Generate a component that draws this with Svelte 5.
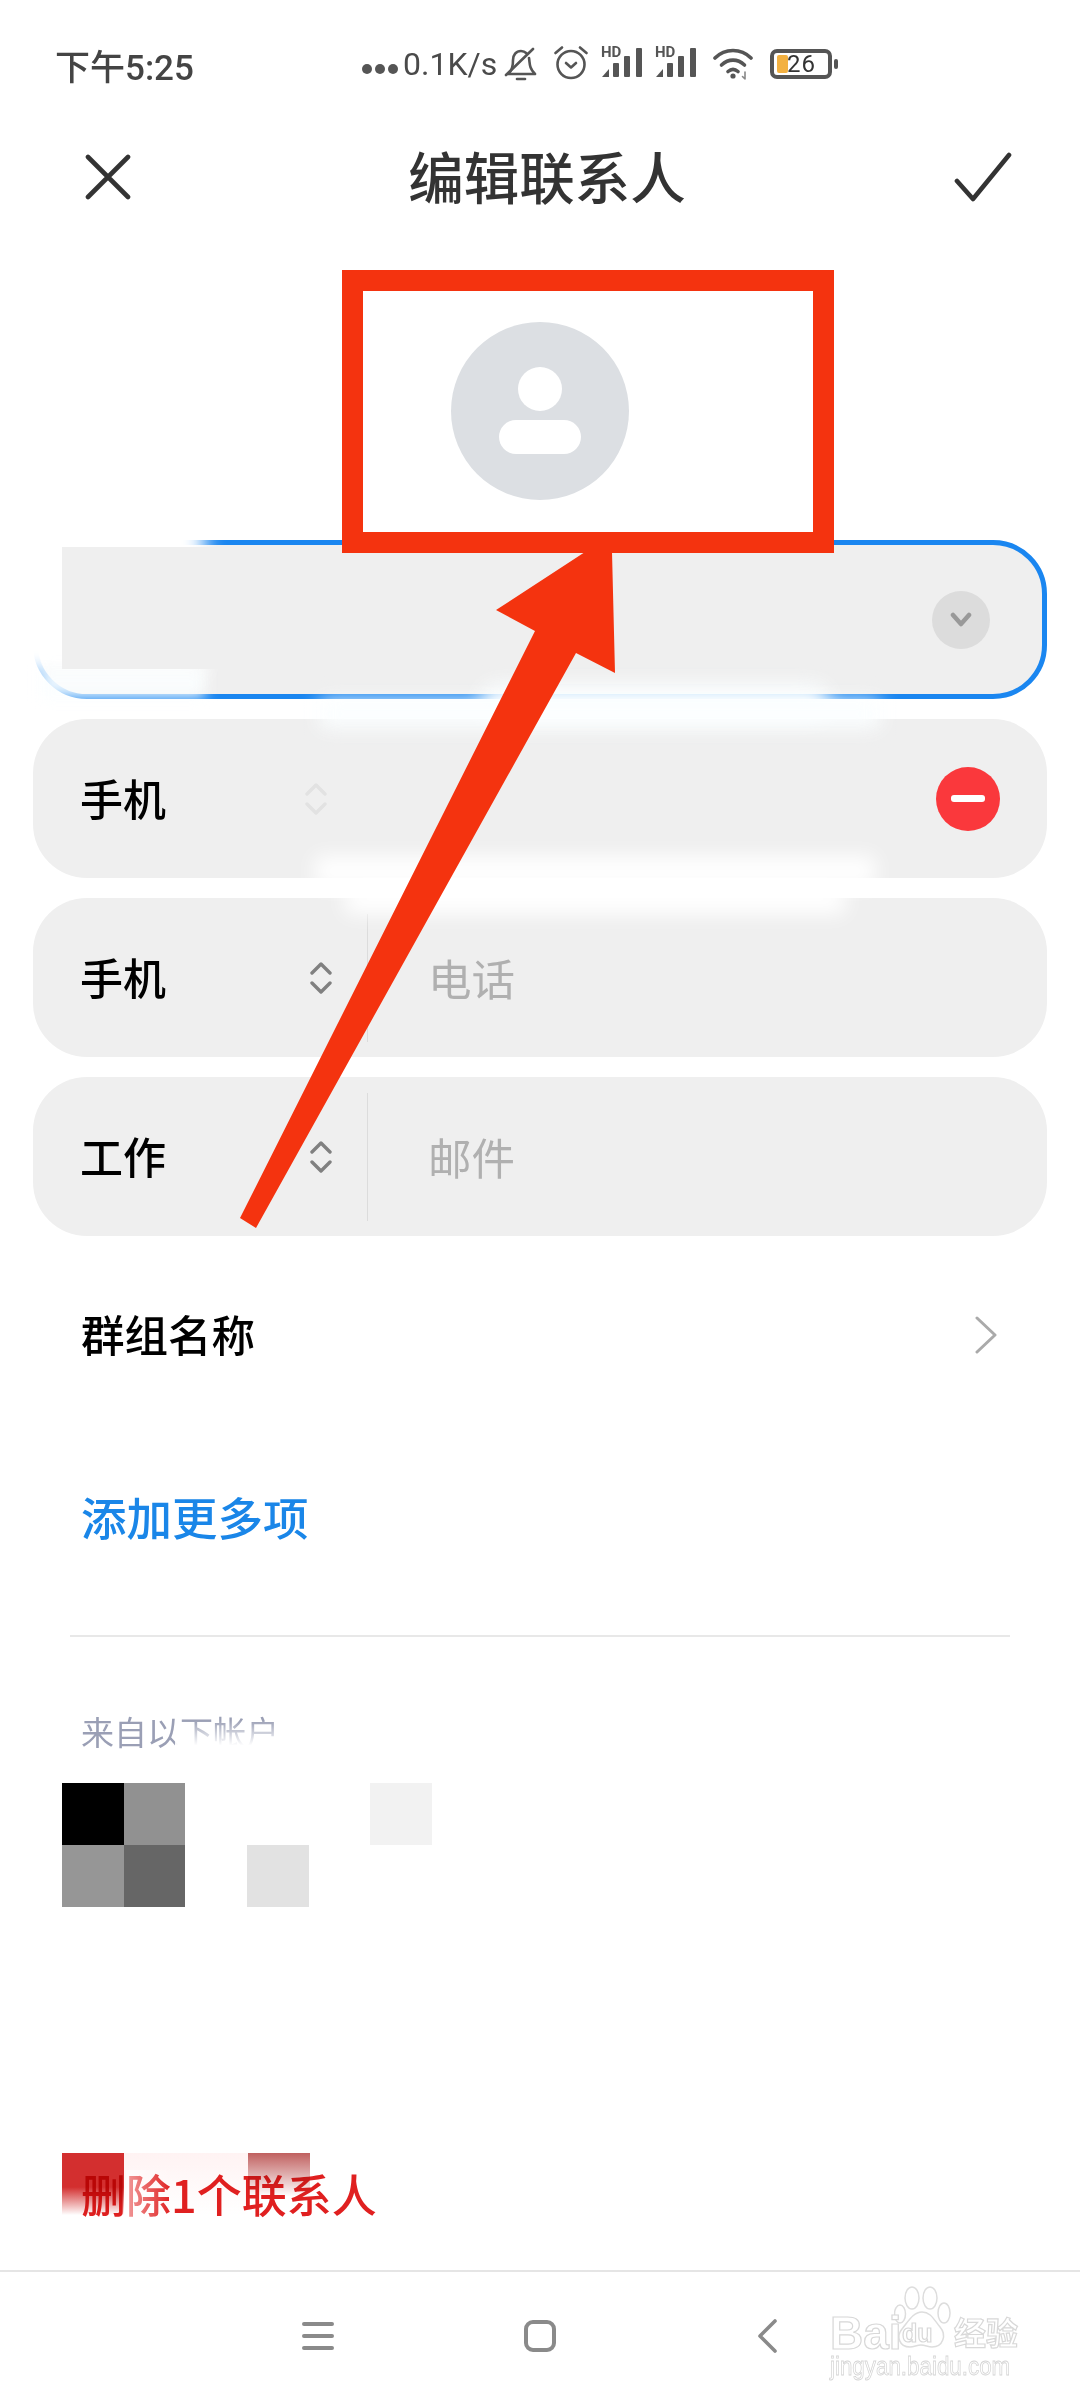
<script>
  const rows = [
    { label: '手机', placeholder: '电话' },
    { label: '工作', placeholder: '邮件' }
  ];
  const cells = [
    { x: 0, y: 0, c: '#000' },
    { x: 1, y: 0, c: '#919191' },
    { x: 5, y: 0, c: '#f2f2f2' },
    { x: 0, y: 1, c: '#969696' },
    { x: 1, y: 1, c: '#666' },
    { x: 3, y: 1, c: '#e2e2e2' }
  ];
</script>

{#snippet updown(cls)}
  <svg class={cls} width="24" height="32" viewBox="0 0 24 32" fill="none" stroke="currentColor" stroke-width="3.4" stroke-linecap="round" stroke-linejoin="round">
    <path d="M3 11 12 2l9 9" />
    <path d="M3 21l9 9 9-9" />
  </svg>
{/snippet}

{#snippet signal()}
  <div class="signal">
    <span class="hd">HD</span>
    <svg width="41" height="30" viewBox="0 0 41 30" fill="#555">
      <path d="M1 30 8 22v8z" />
      <rect x="12" y="16" width="6" height="14" rx="1" />
      <rect x="23" y="9" width="6" height="21" rx="1" />
      <rect x="35" y="1" width="6" height="29" rx="1" />
    </svg>
  </div>
{/snippet}

<div class="page">
  <div class="status">
    <span class="time">下午5:25</span>
    <span class="speed"><span class="dots"><i></i><i></i><i></i></span>0.1K/s</span>
    <svg class="bell" width="33" height="34" viewBox="0 0 33 34" fill="none" stroke="#555" stroke-width="2.6" stroke-linecap="round" stroke-linejoin="round">
      <path d="M6 25c3-4 3-8 3-12 0-5 3-9 8-9 2.500 0 4 .8 5.500 2.200" />
      <path d="M25 11c1 6 0 10 6 16H4" />
      <path d="M2 28 29 2" />
      <path d="M13 32h8" />
    </svg>
    <svg class="alarm" width="34" height="35" viewBox="0 0 34 35" fill="none" stroke="#555" stroke-width="2.600" stroke-linecap="round" stroke-linejoin="round">
      <circle cx="17" cy="19.500" r="13.500" />
      <path d="M1.500 8 8 2.500M32.500 8 26 2.500" />
      <path d="M12 18l5 4.500 5-4.500" />
    </svg>
    {@render signal()}
    {@render signal()}
    <svg class="wifi" width="42" height="34" viewBox="0 0 42 34" fill="none" stroke="#555" stroke-width="3.600" stroke-linecap="round">
      <path d="M2 11C12 1 28 1 38 11" />
      <path d="M8.500 18c7-6.500 16-6.500 23 0" />
      <path d="M15 24.500c3.500-3 6.500-3 10 0" />
      <circle cx="20" cy="29" r="2.600" fill="#555" stroke="none" />
      <path d="M32 25v7M29.500 29.500 32 32" stroke-width="1.600" stroke="#888" />
    </svg>
    <div class="battery">
      <div class="cell"><span class="fill"></span><span class="level">26</span></div>
      <span class="nub"></span>
    </div>
  </div>

  <header>
    <svg width="46" height="46" viewBox="0 0 46 46" stroke="#333" stroke-width="4.600" stroke-linecap="round">
      <path d="M3 3l40 40M43 3 3 43" />
    </svg>
    <h1>编辑联系人</h1>
    <svg width="58" height="50" viewBox="0 0 58 50" fill="none" stroke="#333" stroke-width="4.600" stroke-linecap="round" stroke-linejoin="round">
      <path d="M3 29 19 47 55 3" />
    </svg>
  </header>

  <div class="avatar">
    <span class="head"></span>
    <span class="body"></span>
  </div>

  <div class="fields">
    <div class="field name">
      <span class="drop">
        <svg width="22" height="16" viewBox="0 0 22 16" fill="none" stroke="#999" stroke-width="4.500" stroke-linecap="round" stroke-linejoin="round"><path d="M3 3l8 9 8-9" /></svg>
      </span>
    </div>
    <div class="field phone">
      <div class="type"><span class="label">手机</span>{@render updown('arrows faint')}</div>
      <span class="remove"><i></i></span>
    </div>
    {#each rows as row}
      <div class="field">
        <div class="type"><span class="label">{row.label}</span>{@render updown('arrows')}</div>
        <span class="placeholder">{row.placeholder}</span>
      </div>
    {/each}
  </div>

  <div class="group">
    <span>群组名称</span>
    <svg width="24" height="38" viewBox="0 0 24 38" fill="none" stroke="#aaa" stroke-width="3" stroke-linecap="round" stroke-linejoin="round"><path d="M3 2l18 17L3 36" /></svg>
  </div>

  <div class="more">添加更多项</div>
  <div class="rule"></div>
  <div class="from">来自以下帐户</div>

  <div class="mosaic">
    {#each cells as cell}
      <span style="grid-column: {cell.x + 1}; grid-row: {cell.y + 1}; background: {cell.c}"></span>
    {/each}
  </div>

  <div class="delete">删除1个联系人</div>

  <nav>
    <svg class="menu" width="32" height="30" viewBox="0 0 32 30" stroke="#8a8a8a" stroke-width="4" stroke-linecap="round"><path d="M2 3h28M2 15h28M2 27h28" /></svg>
    <svg class="home" width="32" height="32" viewBox="0 0 32 32" fill="none" stroke="#8a8a8a" stroke-width="4"><rect x="2" y="2" width="28" height="28" rx="7" /></svg>
    <svg class="back" width="20" height="34" viewBox="0 0 20 34" fill="none" stroke="#8a8a8a" stroke-width="3.600" stroke-linecap="round" stroke-linejoin="round"><path d="M18 2 3 17l15 15" /></svg>
  </nav>

  <!-- smudges left on the screenshot -->
  <div class="smudge left"></div>
  <div class="smudge corner"></div>
  <div class="smudge s1"></div>
  <div class="smudge s2"></div>
  <div class="smudge s3"></div>
  <div class="smudge s4"></div>
  <div class="redact"></div>
  <div class="from-fade"></div>
  <div class="red-blocks"><span></span><span></span><span></span></div>
  <div class="del-fade"></div>

  <!-- annotation drawn over the screenshot -->
  <div class="frame"></div>
  <svg class="arrow" width="1080" height="1300" viewBox="0 0 1080 1300" fill="#f4330f">
    <path d="M585 552 612 552 615 673 576 653 256 1228 240 1218 535 631 496 610z" />
  </svg>

  <div class="watermark">
    <svg class="paw" width="60" height="66" viewBox="0 0 60 66" fill="#fff" stroke="#ddd" stroke-width="1.500">
      <ellipse cx="18" cy="13" rx="7" ry="11" />
      <ellipse cx="36" cy="13" rx="7" ry="11" />
      <ellipse cx="6" cy="29" rx="5.500" ry="9" />
      <ellipse cx="50" cy="28" rx="6" ry="10" />
      <path d="M28 27c9 0 12 8 18 15 7 8 3 20-8 20-4 0-7-2-11-2-4 0-7 2-11 2-11 0-14-11-8-18 6-7 11-17 20-17z" />
    </svg>
    <span class="bai">Bai</span>
    <span class="du">du</span>
    <span class="jy">经验</span>
    <span class="url">jingyan.baidu.com</span>
  </div>
</div>

<style>
  :global(body) {
    margin: 0;
    background: #fff;
  }

  .page {
    position: relative;
    width: 1080px;
    height: 2400px;
    overflow: hidden;
    display: flex;
    flex-direction: column;
    background: #fff;
    font-family: 'Noto Sans CJK SC', 'Noto Sans', sans-serif;
    color: #000;
  }

  .status {
    height: 128px;
    flex: none;
    display: flex;
    align-items: center;
    padding-left: 55px;
    color: #444;
  }

  .time {
    width: 307px;
    font-size: 35px;
    font-weight: 500;
    font-family: 'Roboto', 'Noto Sans CJK SC', sans-serif;
  }

  .speed {
    display: flex;
    align-items: center;
    width: 142px;
    font-family: 'Roboto', sans-serif;
    font-size: 32px;
    color: #4a4a4a;
  }

  .dots {
    display: flex;
    gap: 3px;
    align-self: flex-end;
    margin: 0 5px 9px 0;
  }

  .dots i {
    width: 10px;
    height: 10px;
    border-radius: 50%;
    background: #555;
  }

  .alarm {
    margin-left: 17px;
    margin-top: -3px;
  }

  .signal {
    position: relative;
    margin-left: 13px;
    padding-top: 1px;
  }

  .signal + .signal {
    margin-left: 13px;
  }

  .hd {
    position: absolute;
    left: 0;
    top: -1px;
    font: 700 15px/14px 'Roboto', sans-serif;
    color: #555;
  }

  .wifi {
    margin-left: 17px;
  }

  .battery {
    display: flex;
    align-items: center;
    gap: 2px;
    margin-left: 15px;
  }

  .cell {
    position: relative;
    box-sizing: border-box;
    width: 62px;
    height: 30px;
    border: 4px solid #555;
    border-radius: 7px;
  }

  .fill {
    position: absolute;
    left: 3px;
    top: 2px;
    width: 11px;
    bottom: 2px;
    border-radius: 2px;
    background: #f3b141;
  }

  .level {
    position: absolute;
    left: 13px;
    top: -2px;
    font: 400 24px/26px 'Roboto', sans-serif;
    letter-spacing: 1px;
    color: #333;
  }

  .nub {
    width: 4px;
    height: 10px;
    border-radius: 2px;
    background: #555;
  }

  header {
    height: 98px;
    flex: none;
    display: flex;
    align-items: center;
    justify-content: space-between;
    padding: 0 68px 0 85px;
  }

  h1 {
    margin: 0 0 0 9px;
    padding-bottom: 5px;
    font-size: 55.500px;
    font-weight: 500;
    color: #333;
  }

  .avatar {
    flex: none;
    align-self: center;
    margin-top: 96px;
    width: 178px;
    height: 178px;
    border-radius: 50%;
    background: #dcdfe3;
    display: flex;
    flex-direction: column;
    align-items: center;
    padding-top: 45px;
    box-sizing: border-box;
  }

  .head {
    width: 44px;
    height: 44px;
    border-radius: 50%;
    background: #fff;
  }

  .body {
    width: 82px;
    height: 34px;
    margin-top: 9px;
    border-radius: 17px;
    background: #fff;
  }

  .fields {
    flex: none;
    margin: 40px 33px 0;
    display: flex;
    flex-direction: column;
    gap: 20px;
  }

  .field {
    box-sizing: border-box;
    height: 159px;
    border-radius: 54px;
    background: #efefef;
    display: flex;
    align-items: center;
  }

  .name {
    border: 5px solid #1a86f0;
    justify-content: flex-end;
    padding-right: 52px;
  }

  .drop {
    width: 58px;
    height: 58px;
    border-radius: 50%;
    background: #dcdcdc;
    display: flex;
    align-items: center;
    justify-content: center;
  }

  .phone {
    justify-content: space-between;
    padding-right: 47px;
  }

  .type {
    box-sizing: border-box;
    width: 335px;
    height: 128px;
    padding: 0 34px 0 47px;
    display: flex;
    align-items: center;
    justify-content: space-between;
    border-right: 1.5px solid #dcdcdc;
  }

  .phone .type {
    border-right: none;
  }

  .label {
    font-size: 43px;
    font-weight: 500;
    line-height: 1;
    padding-bottom: 3px;
  }

  .arrows {
    color: #808080;
  }

  .faint {
    color: #e2e2e2;
    transform: translateX(-6px);
  }

  .placeholder {
    margin-left: 60px;
    font-size: 43.500px;
    line-height: 1;
    color: #b0b0b0;
  }

  .remove {
    width: 64px;
    height: 64px;
    border-radius: 50%;
    background: #fa383c;
    display: flex;
    align-items: center;
    justify-content: center;
  }

  .remove i {
    width: 34px;
    height: 7px;
    border-radius: 3px;
    background: #fff;
  }

  .group {
    flex: none;
    height: 120px;
    margin-top: 39px;
    padding: 0 82px 0 81px;
    display: flex;
    align-items: center;
    justify-content: space-between;
    font-size: 43.500px;
    font-weight: 500;
  }

  .group span {
    padding-bottom: 3px;
  }

  .more {
    flex: none;
    height: 120px;
    margin-top: 61px;
    padding-left: 81px;
    display: flex;
    align-items: center;
    font-size: 45.500px;
    font-weight: 500;
    color: #1a86e8;
  }

  .rule {
    flex: none;
    height: 2px;
    margin: 59px 70px 0;
    background: #e8e8e8;
  }

  .from {
    flex: none;
    margin-top: 74px;
    padding-left: 81px;
    height: 40px;
    font-size: 33px;
    line-height: 40px;
    color: #9a9fb5;
  }

  .mosaic {
    flex: none;
    margin: 32px 0 0 62px;
    display: grid;
    grid-template-columns: repeat(6, 61.700px);
    grid-template-rows: repeat(2, 62px);
  }

  .delete {
    flex: none;
    margin-top: 254px;
    padding-left: 81px;
    height: 66px;
    font-size: 45px;
    line-height: 66px;
    font-weight: 500;
    color: #e02020;
  }

  nav {
    flex: none;
    margin-top: auto;
    height: 130px;
    box-sizing: border-box;
    border-top: 2px solid #e5e5e5;
    padding: 0 0 0 302px;
    display: flex;
    align-items: center;
  }

  .home {
    margin-left: 190px;
  }

  .back {
    margin-left: 201px;
  }

  .smudge {
    position: absolute;
    background: #fbfeff;
    filter: blur(10px);
  }

  .left {
    left: -40px;
    top: 510px;
    width: 245px;
    height: 165px;
    background: #fff;
  }

  .corner {
    left: 40px;
    top: 668px;
    width: 165px;
    height: 30px;
    filter: blur(7px);
    opacity: 0.9;
  }

  .s1 {
    left: 480px;
    top: 684px;
    width: 350px;
    height: 36px;
    border-radius: 30px;
  }

  .s2 {
    left: 320px;
    top: 700px;
    width: 560px;
    height: 28px;
  }

  .s3 {
    left: 315px;
    top: 856px;
    width: 560px;
    height: 30px;
    background: #fff;
  }

  .s4 {
    left: 345px;
    top: 884px;
    width: 500px;
    height: 30px;
    background: #fff;
  }

  .redact {
    position: absolute;
    left: 62px;
    top: 547px;
    width: 190px;
    height: 122px;
    background: #efefef;
  }

  .from-fade {
    position: absolute;
    left: 175px;
    top: 1720px;
    width: 125px;
    height: 30px;
    background: linear-gradient(to bottom, rgba(255, 255, 255, 0), #fff 85%);
  }

  .red-blocks {
    position: absolute;
    left: 62px;
    top: 2153px;
    display: grid;
    grid-template-columns: repeat(4, 62px);
    height: 62px;
    mix-blend-mode: multiply;
  }

  .red-blocks span:nth-child(1) {
    background: linear-gradient(to bottom, #d32f2f 55%, #fff);
  }

  .red-blocks span:nth-child(2) {
    grid-column: 2 / 4;
    background: linear-gradient(to bottom, #fff3f3, #fff);
  }

  .red-blocks span:nth-child(3) {
    background: linear-gradient(to bottom, #c0605f, #fff 70%);
  }

  .del-fade {
    position: absolute;
    left: 126px;
    top: 2170px;
    width: 46px;
    height: 50px;
    background: linear-gradient(to right, rgba(255, 255, 255, 0.55), rgba(255, 255, 255, 0));
  }

  .frame {
    position: absolute;
    left: 342px;
    top: 270px;
    width: 492px;
    height: 283px;
    box-sizing: border-box;
    border: 21px solid #f4330f;
  }

  .arrow {
    position: absolute;
    left: 0;
    top: 0;
  }

  .watermark {
    position: absolute;
    left: 830px;
    top: 2285px;
    width: 190px;
    height: 92px;
    color: #fff;
    font-family: 'Liberation Sans', sans-serif;
    font-weight: 700;
  }

  .watermark span {
    position: absolute;
    -webkit-text-stroke: 1.2px #d8d8d8;
    line-height: 1;
  }

  .paw {
    position: absolute;
    left: 64px;
    top: 0;
  }

  .bai {
    left: 0;
    top: 25px;
    font-size: 46px;
  }

  .du {
    left: 72px;
    top: 36px;
    font-size: 25px;
  }

  .jy {
    left: 124px;
    top: 30px;
    font-size: 32px;
    font-family: 'Noto Sans CJK SC', sans-serif;
  }

  .watermark .url {
    left: 0;
    top: 68px;
    font-size: 26px;
    font-weight: 400;
    color: #fff;
    -webkit-text-stroke: 0.8px #d4d4d4;
    transform: scaleX(0.86);
    transform-origin: left top;
    white-space: nowrap;
  }
</style>
